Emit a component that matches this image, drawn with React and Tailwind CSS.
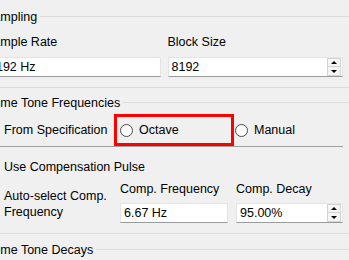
import React from 'react'

// Qt-style settings panel, clipped on the left edge like the reference.
function GroupTitle({ children }) {
  return (
    <div className="flex h-[14px] w-[380px] leading-[14px]">
      <span className="whitespace-nowrap">{children}</span>
      <div className="ml-[3px] mt-[6px] h-px flex-1 bg-[#dcdcdc]" />
    </div>
  )
}

function FrameEnd() {
  return <div className="h-px w-[380px] bg-[#dcdcdc]" />
}

function LineEdit({ value, spin }) {
  return (
    <div className="flex h-[20px] items-center border border-[#e4e4e4] border-b-[#9a9a9a] bg-white pl-[3px] pr-px">
      <span className="flex-1 leading-[14px]">{value}</span>
      {spin && (
        <div className="flex h-[18px] w-[14px] flex-col">
          <div className="flex h-[9px] items-center justify-center border border-[#d4d4d4] bg-[#f5f5f5]">
            <div className="h-0 w-0 border-x-[3px] border-b-[3px] border-x-transparent border-b-black" />
          </div>
          <div className="flex h-[9px] items-center justify-center border border-t-0 border-[#d4d4d4] bg-[#f5f5f5]">
            <div className="h-0 w-0 border-x-[3px] border-t-[3px] border-x-transparent border-t-black" />
          </div>
        </div>
      )}
    </div>
  )
}

function Radio({ label }) {
  return (
    <div className="flex items-center gap-[6px]">
      <div className="h-[13px] w-[13px] rounded-full border border-[#4a4a4a] bg-white" />
      <span className="whitespace-nowrap leading-[14px]">{label}</span>
    </div>
  )
}

function Check({ children, className = '' }) {
  return (
    <div className={`flex gap-[6px] ${className}`}>
      <div className="mt-px h-[13px] w-[13px] shrink-0 border border-[#333] bg-white" />
      <span>{children}</span>
    </div>
  )
}

export default function App() {
  return (
    <div
      className="relative h-[260px] w-[349px] overflow-hidden bg-[#f0f0f0] text-[12.5px] text-black"
      style={{ fontFamily: '"Liberation Sans", Arial, sans-serif' }}
    >
      <div className="ml-[-15px] flex w-[358px] flex-col pt-[10px]">
        <GroupTitle>Sampling</GroupTitle>

        <div className="mt-[11px] grid grid-cols-2 gap-x-[7px]">
          <span className="leading-[14px]">Sample Rate</span>
          <span className="leading-[14px]">Block Size</span>
          <div className="mt-[8px]">
            <LineEdit value="8192 Hz" />
          </div>
          <div className="mt-[8px]">
            <LineEdit value="8192" spin />
          </div>
        </div>

        <div className="mt-[10px]">
          <FrameEnd />
        </div>

        <div className="mt-[8px]">
          <GroupTitle>Prime Tone Frequencies</GroupTitle>
        </div>

        <div className="mt-[4px] flex h-[33px] items-start border-b border-[#a0a0a0]">
          <div className="flex h-[32px] w-[129px] items-center">
            <Radio label="From Specification" />
          </div>
          <div className="flex h-[32px] w-[120px] items-center border-[3px] border-[#ff0000] pl-[3px]">
            <Radio label="Octave" />
          </div>
          <div className="ml-px flex h-[32px] items-center">
            <Radio label="Manual" />
          </div>
        </div>

        <Check className="mt-[13px] leading-[14px]">Use Compensation Pulse</Check>

        <div className="mt-[8px] grid grid-cols-[127px_108px_107px] gap-x-[8px]">
          <Check className="row-span-2 mt-[6px] leading-[16px]">
            Auto-select Comp.
            <br />
            Frequency
          </Check>
          <span className="whitespace-nowrap leading-[14px]">Comp. Frequency</span>
          <span className="whitespace-nowrap leading-[14px]">Comp. Decay</span>
          <div className="mt-[7px]">
            <LineEdit value="6.67 Hz" />
          </div>
          <div className="mt-[7px]">
            <LineEdit value="95.00%" spin />
          </div>
        </div>

        <div className="mt-[10px]">
          <FrameEnd />
        </div>

        <div className="mt-[9px]">
          <GroupTitle>Prime Tone Decays</GroupTitle>
        </div>
      </div>
    </div>
  )
}
